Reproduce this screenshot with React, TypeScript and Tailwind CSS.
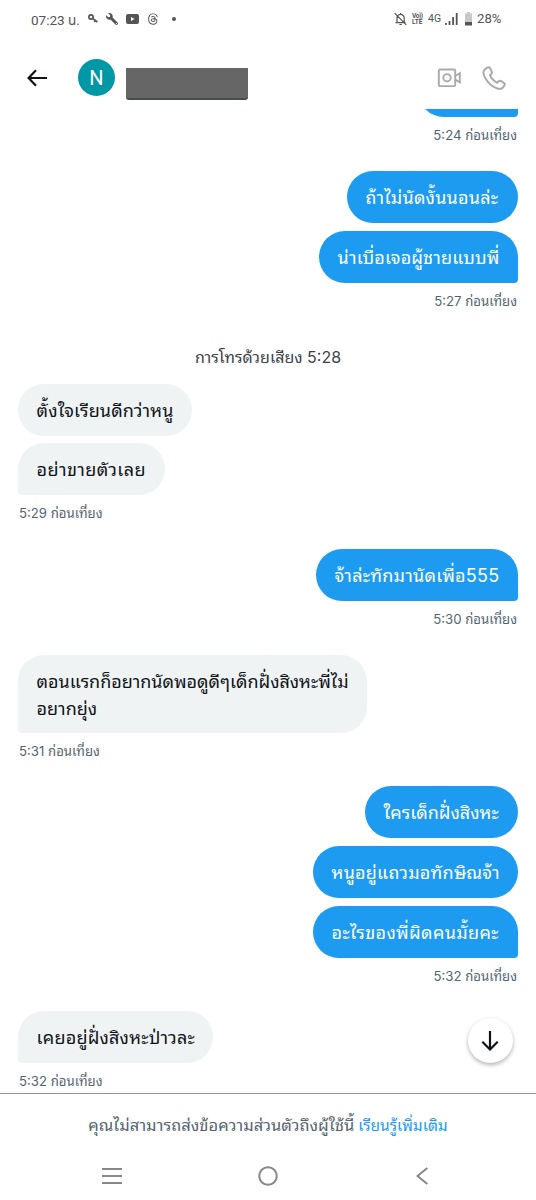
import { ReactNode } from "react";
import clsx from "clsx";
import { FaWrench } from "react-icons/fa";
import { FaThreads } from "react-icons/fa6";

type Message = {
  text: string[];
  size: string;
  tail?: boolean;
};

type Group = {
  mine: boolean;
  time: string;
  messages: Message[];
};

const firstGroup: Group = {
  mine: true,
  time: "5:27 ก่อนเที่ยง",
  messages: [
    { text: ["ถ้าไม่นัดงั้นนอนล่ะ"], size: "w-[171px] tracking-[0.2px]" },
    {
      text: ["น่าเบื่อเจอผู้ชายแบบพี่"],
      size: "w-[199px] tracking-[0.14px]",
      tail: true,
    },
  ],
};

const groups: Group[] = [
  {
    mine: false,
    time: "5:29 ก่อนเที่ยง",
    messages: [
      { text: ["ตั้งใจเรียนดีกว่าหนู"], size: "w-[174px] tracking-[0.14px]" },
      {
        text: ["อย่าขายตัวเลย"],
        size: "w-[147px] tracking-[0.4px]",
        tail: true,
      },
    ],
  },
  {
    mine: true,
    time: "5:30 ก่อนเที่ยง",
    messages: [
      {
        text: ["จ้าล่ะทักมานัดเพื่อ555"],
        size: "w-[202px] tracking-[0.24px]",
        tail: true,
      },
    ],
  },
  {
    mine: false,
    time: "5:31 ก่อนเที่ยง",
    messages: [
      {
        text: ["ตอนแรกก็อยากนัดพอดูดีๆเด็กฝั่งสิงหะพี่ไม่", "อยากยุ่ง"],
        size: "w-[349px] tracking-[-0.03px]",
        tail: true,
      },
    ],
  },
  {
    mine: true,
    time: "5:32 ก่อนเที่ยง",
    messages: [
      { text: ["ใครเด็กฝั่งสิงหะ"], size: "w-[153px]" },
      { text: ["หนูอยู่แถวมอทักษิณจ้า"], size: "w-[205px] tracking-[0.2px]" },
      {
        text: ["อะไรของพี่ผิดคนมั้ยคะ"],
        size: "w-[205px] tracking-[0.35px]",
        tail: true,
      },
    ],
  },
  {
    mine: false,
    time: "5:32 ก่อนเที่ยง",
    messages: [
      {
        text: ["เคยอยู่ฝั่งสิงหะป่าวละ"],
        size: "w-[195px] tracking-[0.2px]",
        tail: true,
      },
    ],
  },
];

const Bubble = ({ message, mine }: { message: Message; mine: boolean }) => (
  <div
    className={clsx(
      "rounded-[26px] pl-[18.6px] pt-[13px] text-[18px] leading-[27px] whitespace-nowrap",
      message.text.length === 1 ? "h-[52px]" : "h-[78px]",
      message.size,
      mine ? "bg-[#1d9bf0] text-white" : "bg-[#eff3f4] text-[#0f1419]",
      message.tail && (mine ? "rounded-br-[4px]" : "rounded-bl-[4px]")
    )}
  >
    {message.text.map((line) => (
      <p key={line}>{line}</p>
    ))}
  </div>
);

const Time = ({ children }: { children: ReactNode }) => (
  <p className="h-[53.7px] pt-2 px-px text-[13.2px] leading-5 text-[#536471]">
    {children}
  </p>
);

const MessageGroup = ({ group }: { group: Group }) => (
  <section
    className={clsx("flex flex-col", group.mine ? "items-end" : "items-start")}
  >
    <div
      className={clsx(
        "flex flex-col gap-[7.6px]",
        group.mine ? "items-end" : "items-start"
      )}
    >
      {group.messages.map((message) => (
        <Bubble key={message.text[0]} message={message} mine={group.mine} />
      ))}
    </div>
    <Time>{group.time}</Time>
  </section>
);

const StatusBar = () => (
  <div className="flex h-[38px] items-center justify-between pb-px pl-[31px] pr-[35px] font-[Roboto,'Noto_Sans_Thai',sans-serif] text-[#555]">
    <div className="flex items-center">
      <span className="w-[48px] pt-1 text-[13.5px] whitespace-nowrap">
        07:23 น.
      </span>
      <svg className="ml-[9px]" width="10" height="10" viewBox="0 0 10 10" fill="none" stroke="currentColor">
        <circle cx="3" cy="3" r="2.1" strokeWidth="1.7" />
        <path d="M4.6 4.4 9.4 8M7.2 6.4 6.3 8" strokeWidth="1.7" />
      </svg>
      <FaWrench className="ml-[8px] -scale-x-100" size={12} />
      <svg className="ml-[8px]" width="13" height="10" viewBox="0 0 13 10">
        <rect width="13" height="10" rx="2" fill="currentColor" />
        <path d="M5 3v4l3.5-2z" fill="#fff" />
      </svg>
      <FaThreads className="ml-[8px]" size={12} />
      <span className="ml-[13px] size-[4px] rounded-full bg-[#555]" />
    </div>
    <div className="flex items-center">
      <svg width="13" height="14" viewBox="0 0 13 14" fill="none" stroke="currentColor" strokeWidth="1.2">
        <path d="M3 10.5V6a3.6 3.6 0 0 1 7.2 0v4.5M1.5 10.7h10M6.6 1v1.5M5.4 12.5h2.4M.7 1.2l11.6 11.6" />
      </svg>
      <span className="ml-[5px] flex w-[11px] flex-col text-[6.5px] leading-[6px] font-bold">
        <span className="tracking-[-0.4px]">Vo))</span>
        <span>LTE</span>
      </span>
      <span className="ml-[5px] w-[13px] pt-[2px] text-[10.5px] leading-none whitespace-nowrap">
        4G
      </span>
      <svg className="ml-[4px]" width="13" height="12" viewBox="0 0 13 12" fill="currentColor">
        <path d="M0 10h1.8v2H0zM3.6 8h1.8v4H3.6zM7.2 4H9v8H7.2zM10.8 0h1.8v12h-1.8z" />
      </svg>
      <svg className="ml-[7px]" width="7" height="14" viewBox="0 0 7 14">
        <path d="M2 0h3v1.5h2V10H0V1.5h2z" fill="#c8c8c8" />
        <path d="M0 10h7v3.5H0z" fill="#555" />
      </svg>
      <span className="ml-[5px] w-[24px] text-[13.2px] leading-none whitespace-nowrap">
        28%
      </span>
    </div>
  </div>
);

const Header = () => (
  <header className="flex h-[71px] items-center pt-[9px] pb-px pl-[27px] pr-[30px]">
    <svg width="21" height="18" viewBox="0 0 21 18" fill="none" stroke="#0f1419" strokeWidth="2.2">
      <path d="M20 9H2M9 1.2 1.6 9 9 16.8" />
    </svg>
    <div className="ml-[30px] flex size-[37px] items-center justify-center rounded-full bg-[#0097a7] font-[Roboto] text-[20px] text-white">
      N
    </div>
    <div className="mt-[12px] ml-[11px] h-[32px] w-[122px] rounded-b-[3px] border-b-2 border-[#494b52] bg-[#666]" />
    <svg className="ml-auto" width="24" height="20" viewBox="0 0 24 20" fill="none" stroke="#aaa" strokeWidth="1.9">
      <rect x="1.8" y="1.5" width="16.4" height="16.6" rx="1.2" />
      <circle cx="10" cy="9.8" r="3.7" />
      <path d="M18.2 8 22.8 5.2v9.2L18.2 11.6" />
    </svg>
    <svg className="ml-[21px]" width="24" height="24" viewBox="0 0 24 24" fill="none" stroke="#aaa" strokeWidth="2" strokeLinejoin="round">
      <path d="M5.2 1.7 3 3.2C1 4.800 1 8.200 3.200 12c2.700 4.700 6.800 8.500 11.500 10.300 2.900 1.100 5.300.6 6.500-1.100l1.200-1.800c.6-.9.400-1.800-.4-2.400l-2.900-1.900c-.9-.6-1.900-.5-2.600.3l-1.300 1.400C12 15.200 9.200 12.300 7.900 9.200l1.400-1.300c.7-.7.900-1.600.4-2.500L8.200 2.400c-.6-1.200-1.900-1.500-3-.7z" />
    </svg>
  </header>
);

const App = () => {
  return (
    <div className="flex h-[1200px] w-[536px] flex-col overflow-hidden bg-white font-[Inter,'Noto_Sans_Thai_Looped','Noto_Sans_Thai','Noto_Sans',sans-serif]">
      <StatusBar />
      <Header />
      <main className="relative h-[984px] overflow-hidden px-[18px]">
        <div className="flex flex-col items-end">
          <div className="h-[8.3px] w-[100px] overflow-hidden">
            <div className="-mt-[43.7px] h-[52px] rounded-[26px] rounded-br-[4px] bg-[#1d9bf0]" />
          </div>
          <Time>5:24 ก่อนเที่ยง</Time>
        </div>
        <MessageGroup group={firstGroup} />
        <p className="h-[47.5px] pt-[9px] text-center text-[16px] leading-6 text-[#3c4248]">
          การโทรด้วยเสียง 5:28
        </p>
        {groups.map((group) => (
          <MessageGroup key={group.messages[0].text[0]} group={group} />
        ))}
        <button className="absolute right-[23px] bottom-[30px] flex size-[45px] items-center justify-center rounded-full bg-white shadow-[0_2px_4px_rgba(0,0,0,0.3)]">
          <svg className="mr-px" width="18" height="20" viewBox="0 0 18 20" fill="none" stroke="#0f1419" strokeWidth="2.2">
            <path d="M9 0v18.5M1.3 10.8 9 18.5l7.7-7.7" />
          </svg>
        </button>
      </main>
      <footer className="flex h-[59px] items-center justify-center gap-1 border-t border-[#8899a6] pt-[5px] whitespace-nowrap">
        <span className="text-[16.5px] text-[#536471]">
          คุณไม่สามารถส่งข้อความส่วนตัวถึงผู้ใช้นี้
        </span>
        <a className="text-[15.5px] text-[#1d9bf0]">เรียนรู้เพิ่มเติม</a>
      </footer>
      <nav className="flex h-[47px] items-center pl-[102px]">
        <svg width="20" height="16" viewBox="0 0 20 16" stroke="#888" strokeWidth="2">
          <path d="M0 1h20M0 8h20M0 15h20" />
        </svg>
        <svg className="ml-[136px]" width="20" height="20" viewBox="0 0 20 20" fill="none" stroke="#888" strokeWidth="2">
          <circle cx="10" cy="10" r="8.8" />
        </svg>
        <svg className="ml-[138px]" width="12" height="18" viewBox="0 0 12 18" fill="none" stroke="#888" strokeWidth="2">
          <path d="M11.3 1 1.5 9l9.8 8" />
        </svg>
      </nav>
    </div>
  );
};

export default App;
